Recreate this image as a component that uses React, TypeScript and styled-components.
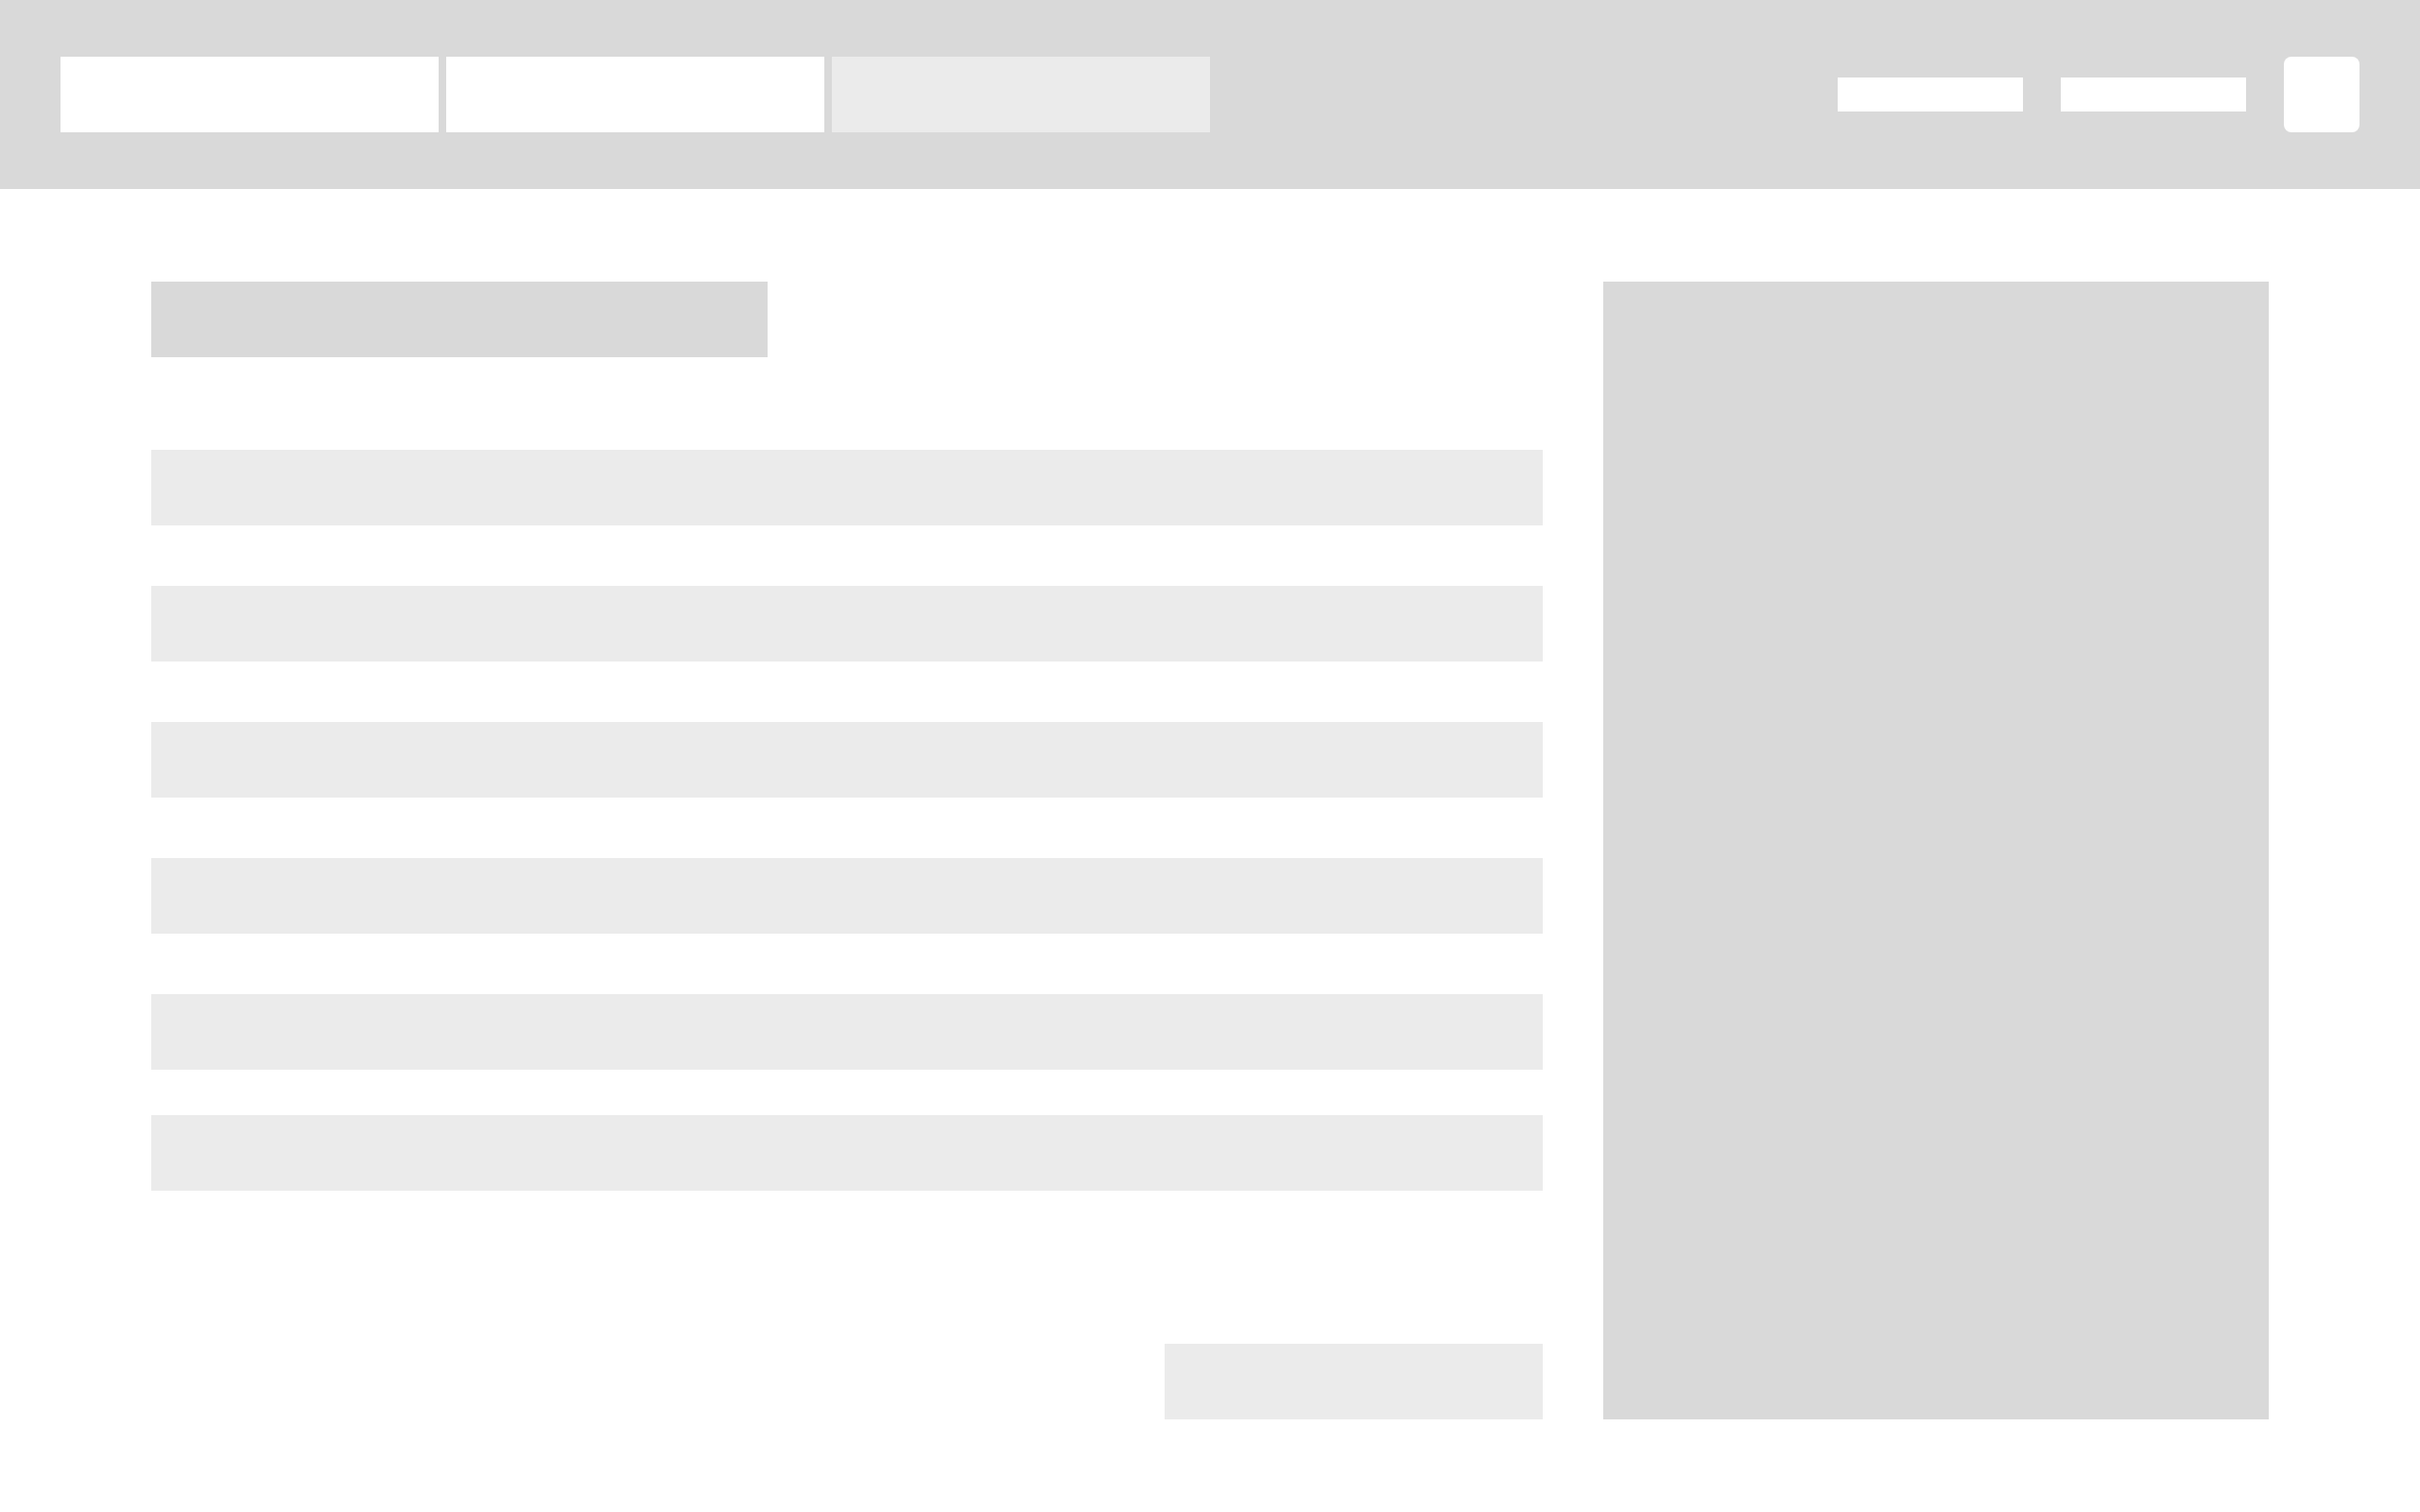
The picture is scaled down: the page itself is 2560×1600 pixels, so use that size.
import * as React from "react";
import styled, { createGlobalStyle } from "styled-components";

const GlobalStyle = createGlobalStyle`
  html, body {
    margin: 0;
    padding: 0;
    background: #ffffff;
    font-family: "Inter", "Liberation Sans", sans-serif;
  }
`;

const tabs = [
  { id: "overview", active: true },
  { id: "details", active: true },
  { id: "history", active: false },
];

const fields = ["name", "email", "company", "role", "location"];

const App: React.FC = () => {
  return (
    <Page>
      <GlobalStyle />
      <TopBar>
        <TabGroup>
          {tabs.map((tab) => (
            <Tab key={tab.id} $active={tab.active} />
          ))}
        </TabGroup>
        <Actions>
          <NavLink />
          <NavLink />
          <AvatarButton />
        </Actions>
      </TopBar>

      <Main>
        <FormColumn>
          <Heading />
          <FieldList>
            {fields.map((f) => (
              <Field key={f} />
            ))}
          </FieldList>
          <Field $offset={48} />
          <Footer>
            <SubmitButton />
          </Footer>
        </FormColumn>
        <SidePanel />
      </Main>
    </Page>
  );
};

export default App;

const Page = styled.div`
  width: 2560px;
  min-height: 1600px;
  background: #ffffff;
`;

const TopBar = styled.header`
  display: flex;
  align-items: center;
  justify-content: space-between;
  height: 200px;
  padding: 0 64px;
  box-sizing: border-box;
  background: #d9d9d9;
`;

const TabGroup = styled.nav`
  display: flex;
  gap: 8px;
`;

const Tab = styled.div<{ $active: boolean }>`
  width: 400px;
  height: 80px;
  background: ${({ $active }) => ($active ? "#ffffff" : "#ebebeb")};
`;

const Actions = styled.div`
  display: flex;
  align-items: center;
  gap: 40px;
`;

const NavLink = styled.div`
  width: 196px;
  height: 36px;
  background: #ffffff;
`;

const AvatarButton = styled.div`
  width: 80px;
  height: 80px;
  border-radius: 8px;
  background: #ffffff;
`;

const Main = styled.main`
  display: grid;
  grid-template-columns: 1472px 704px;
  gap: 64px;
  padding: 98px 160px;
`;

const FormColumn = styled.section`
  display: flex;
  flex-direction: column;
`;

const Heading = styled.div`
  width: 652px;
  height: 80px;
  margin-bottom: 98px;
  background: #d9d9d9;
`;

const FieldList = styled.div`
  display: flex;
  flex-direction: column;
  gap: 64px;
`;

const Field = styled.div<{ $offset?: number }>`
  height: 80px;
  margin-top: ${({ $offset }) => ($offset ? `${$offset}px` : "0")};
  background: #ebebeb;
`;

const Footer = styled.div`
  display: flex;
  justify-content: flex-end;
  margin-top: 162px;
`;

const SubmitButton = styled.div`
  width: 400px;
  height: 80px;
  background: #ebebeb;
`;

const SidePanel = styled.aside`
  background: #d9d9d9;
`;
